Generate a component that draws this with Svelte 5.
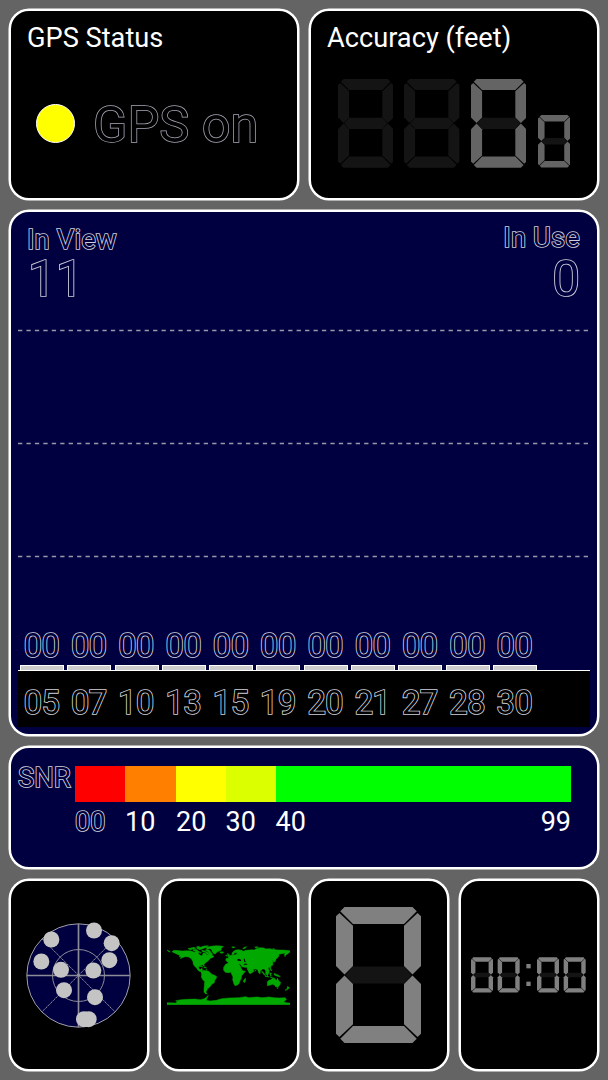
<script lang="ts">
	const satellites = [
		{ prn: '05', snr: '00' },
		{ prn: '07', snr: '00' },
		{ prn: '10', snr: '00' },
		{ prn: '13', snr: '00' },
		{ prn: '15', snr: '00' },
		{ prn: '19', snr: '00' },
		{ prn: '20', snr: '00' },
		{ prn: '21', snr: '00' },
		{ prn: '27', snr: '00' },
		{ prn: '28', snr: '00' },
		{ prn: '30', snr: '00' },
	];

	const gridLines = [41.5, 154.5, 267.5];

	const snrBands = [
		{ color: '#ff0000', label: '00', width: 50 },
		{ color: '#ff8000', label: '10', width: 51 },
		{ color: '#ffff00', label: '20', width: 49.5 },
		{ color: '#dcff00', label: '30', width: 50 },
		{ color: '#00ff00', label: '40', width: 295.5 },
	];

	const skyDots = [
		[155, 207],
		[283, 180],
		[336, 218],
		[329, 269],
		[125, 273],
		[184, 298],
		[281, 300],
		[193, 359],
		[286, 380],
		[253, 446],
		[267, 446],
	];

	// segments in a 100x160 box, a..g
	const segments: Record<string, string> = {
		a: '10,0 90,0 95,5 80,20 20,20 5,5',
		b: '96,7 100,11 100,69.5 90,79.5 80,69.5 80,22',
		c: '90,80.5 100,90.5 100,149 96,153 80,138 80,90.5',
		d: '20,140 80,140 95,155 90,160 10,160 5,155',
		e: '10,80.5 20,90.5 20,138 4,153 0,149 0,90.5',
		f: '4,7 20,22 20,69.5 10,79.5 0,69.5 0,11',
		g: '20,70 80,70 89,80 80,90 20,90 11,80',
	};

	const lit: Record<string, string> = { '0': 'abcdef', ' ': '' };
</script>

{#snippet digit(value: string)}
	{#each Object.entries(segments) as [name, points]}
		<polygon {points} class={lit[value].includes(name) ? 'seg-on' : 'seg-off'} />
	{/each}
{/snippet}

<main class="screen">
	<div class="row top">
		<section class="panel">
			<h2 class="title">GPS Status</h2>
			<div class="status">
				<span class="lamp"></span>
				<span class="outline big">GPS on</span>
			</div>
		</section>
		<section class="panel">
			<h2 class="title">Accuracy (feet)</h2>
			<div class="accuracy">
				{#each [' ', ' ', '0'] as d}
					<svg class="digit" viewBox="0 0 100 160">{@render digit(d)}</svg>
				{/each}
				<svg class="digit small" viewBox="0 0 100 160">{@render digit('0')}</svg>
			</div>
		</section>
	</div>

	<section class="panel navy chart">
		<div class="counts">
			<div class="count">
				<span class="outline label">In View</span>
				<span class="outline number">11</span>
			</div>
			<div class="count right">
				<span class="outline label">In Use</span>
				<span class="outline number">0</span>
			</div>
		</div>
		<svg class="grid" viewBox="0 0 572 340">
			{#each gridLines as y}
				<line x1="0" x2="571" y1={y} y2={y} />
			{/each}
		</svg>
		<div class="bars">
			{#each satellites as sat}
				<div class="sat">
					<span class="outline value">{sat.snr}</span>
					<span class="bar"></span>
				</div>
			{/each}
		</div>
		<div class="axis">
			{#each satellites as sat}
				<span class="outline value prn">{sat.prn}</span>
			{/each}
		</div>
	</section>

	<section class="panel navy snr">
		<span class="outline snr-title">SNR</span>
		<div class="scale">
			{#each snrBands as band, i}
				<div class="band" style="width: {band.width}px">
					<div class="swatch" style="background: {band.color}"></div>
					<div class="band-labels">
						<span class:outline={i === 0}>{band.label}</span>
						{#if i === snrBands.length - 1}<span>99</span>{/if}
					</div>
				</div>
			{/each}
		</div>
	</section>

	<div class="row tabs">
		<section class="panel tab">
			<svg class="radar" viewBox="79 157.5 315 315">
				<circle cx="236.5" cy="315" r="155" fill="#000040" stroke="#a0a0a8" stroke-width="3" />
				<circle cx="236.5" cy="315" r="78" fill="none" stroke="#8c8c98" stroke-width="3" />
				<path d="M81 315H391M236.5 160V470" stroke="#8c8c98" stroke-width="5" />
				<path d="M128 206L345 423M345 206L128 423" stroke="#9c9ca6" stroke-width="3" stroke-dasharray="5 2" />
				{#each skyDots as [cx, cy]}
					<circle {cx} {cy} r="24" fill="#c4c4c4" />
				{/each}
			</svg>
		</section>
		<section class="panel tab">
			<svg class="world" viewBox="36 46 369 180">
				<!-- North America -->
				<path d="M36 61l5 2 5 4-5-1zM51 66l3-3 8-1 20 2 14-1 12 1 10 4 8-5 6 2-2 7 6 5 5 2 3-8 7-1 5 6 6-2-3-8-8-5 6-2 8 4 3 6 5 4-3 4 7 3-5 4-7 2-5 7-8 6-5 5 1 6-4-4-8 1-5 5 1 6 5 1 4-3 2 4-3 5 6 3 5 5-4-1-9-5-8-4-5-7-6-6-4-6-1-8-5-9-8-5-11-1-8 3-6 3 3-5-7-1 4-3-5-2z" />
				<path d="M99 57l7-2 6 3-5 3zM108 55l9-2 5 3-7 3zM113 61l10-2 6 4-10 2zM125 56l11-3 11-4 13-1-7 5-8 4-11 3zM140 62l8 1 10 5 4 6-6-1-5-5-9-2zM133 66l6 3-4 2zM124 52l6-2 4 2-7 3zM158 85l6 1-2 4-5-2z" />
				<!-- Greenland and Iceland -->
				<path d="M153 53l14-3 17-2 14 1 7 2-7 5 1 5-6 3-7 3-5 6-4-1-5-5-2-7-5-3-9 1zM195 67l7-1 4 2-4 3-6-1z" />
				<!-- Caribbean -->
				<path d="M132 108l6 0 6 4-6-1zM146 112l5 0 4 3-6 0zM153 119l2 0 0 4z" />
				<!-- South America -->
				<path d="M139 127l5-5 8 1 9 2 6 5 3 4 9 3 6 4-2 6-4 5-1 7-7 4-5 7-4 4-5 3-1 5-3 4 1 5 3 2-6-1-4-5 0-8 1-10 1-14-5-4-5-8 1-6z" />
				<!-- Africa -->
				<path d="M206 113l6-9 8-4 10-1 1 4 9 2 11-1 4 5 5 10 4 5 7 0-4 6-7 8-2 10-3 6-4 9-4 3-7 2-3-5-4-13 1-8-4-8-2-6-9 1-8-1-5-6z" />
				<path d="M267 150l5-4-1 8-3 5-3-3z" />
				<!-- Europe and Asia -->
				<path d="M212 92l2-6 7 0-2-4 6-3 3-3 8 1 8-3 6-1-6-2 1-3-7 2-2 6-4-1-1-4 3-5 8-5 9-1 9 2 5 3 8-3 10-1 9-1 6 1 5-4 12-3 13 1 3 3 14-1 10 3 14 1 13 0 12 1 10 1 8 2-2 4-7-1-4 4-7 4-2 5-2-8 4-3-12 2-9 2 1 4-5 7-6 3 0 7-3 2-1-4-5 0 1 5 1 7-6 5-7 3-1 4 3 6-4 5-4-4-1 7 5 5-2 2-4-6-1-9-4-5-5 0-7 6-1 9-4-4-3-9-7-2-7 1 3 5-4 4-8 4-3-3-5-11-1-5-8 0-4-2 0-4 8-1 6-1-3-4-7 1-4 5 2 4-4 1-4-5-4-5-2 3 4 5-1 3-6-8-6 2-4 5-5 0z" />
				<path d="M217 72l3 0 4 7-6 1 1-4zM212 76l4 1-2 3zM230 52l6-1 4 2-6 2zM263 57l5-4 7-2-6 6zM299 52l8-1 3 2-8 1zM353 57l7 1-2 2z" />
				<path d="M360 80l3 5-1 5-4 4-6 5 1-4 6-5zM300 120l2 3-2 2zM344 108l3 4 0 6 4 5-3 0-4-8zM320 124l6 5 6 9-3-1-7-8zM334 127l5-4 4 3-3 8-5 1-3-4zM345 130l5 1-3 3 2 5-4-2zM330 139l9 1 3 2-9-1zM345 142l8 1-4 1zM358 131l5 3 7 2 6 6-8-2-5-2-6-3z" />
				<!-- Black and Caspian seas -->
				<path d="M246 90l5-3 8 4-1 3-10-1zM266 87l3 0 3 11-4-1z" class="sea" />
				<!-- Oceania -->
				<path d="M337 156l5-4 6-2 4-4 6-1 2 4 5 3 2-6 5 8 4 5-1 6-5 6-7 1-4-5-6-3-7 2-9 2zM366 174l4 0-2 3zM398 170l5 4-4 4-4 3-5 1 6-4zM376 157l2 1-1 1z" />
				<!-- Antarctica -->
				<path d="M36 225V219L62 220 67 217 62 213 79 210 98 209 119 208 136 210 148 207 155 202 160 197 156 206 154 212 166 214 184 212 200 207 222 205 252 204 272 201 281 204 308 202 320 204 342 202 358 204 372 205 391 204 394 210 386 216 393 219 405 220V225Z" />
			</svg>
		</section>
		<section class="panel tab">
			<svg class="huge" viewBox="0 0 100 160">{@render digit('0')}</svg>
		</section>
		<section class="panel tab">
			<svg class="clock" viewBox="0 0 344 108">
				{#each [0, 80, 198, 278] as x}
					<g transform="translate({x} 1) scale(0.66)">{@render digit('0')}</g>
				{/each}
				<rect x="166" y="21" width="13" height="13" />
				<rect x="166" y="74" width="13" height="13" />
			</svg>
		</section>
	</div>
</main>

<style>
	:global(body) {
		background: #646464;
	}
	.screen {
		box-sizing: border-box;
		width: 608px;
		height: 1080px;
		padding: 9px;
		display: flex;
		flex-direction: column;
		gap: 10px;
		background: #646464;
		color: #fff;
		font-family: Roboto, sans-serif;
		font-size: 27px;
		line-height: 32px;
		overflow: hidden;
	}
	.row {
		display: grid;
		gap: 10px;
		width: 590px;
	}
	.top {
		grid-template-columns: 1fr 1fr;
		height: 191px;
	}
	.panel {
		--panel: #000;
		box-sizing: border-box;
		border: 2px solid #fff;
		border-radius: 20px;
		box-shadow: 0 0 0 0.5px #fff;
		background: var(--panel);
	}
	.navy {
		--panel: #000040;
		width: 590px;
	}
	.title {
		margin: 11px 0 0 16px;
		font-size: 27.2px;
		font-weight: 400;
		line-height: 32px;
	}
	/* the fill is painted over the inner half of the stroke */
	.outline {
		color: var(--panel);
		font-weight: 400;
		-webkit-text-stroke: 1.7px #d0d0da;
		paint-order: stroke fill;
	}
	.status {
		display: flex;
		align-items: center;
		gap: 18px;
		height: 60px;
		margin: 39px 0 0 25px;
	}
	.lamp {
		box-sizing: border-box;
		width: 39px;
		height: 39px;
		border: 1px solid #fff;
		border-radius: 50%;
		background: #ff0;
	}
	.big {
		padding-top: 3px;
		font-size: 50.5px;
		line-height: 60px;
		-webkit-text-stroke: 1.5px #a8a8b8;
	}
	.accuracy {
		display: flex;
		align-items: flex-end;
		gap: 11.3px;
		margin: 25px 0 0 26.5px;
		--on: #646464;
	}
	.digit {
		width: 55.4px;
		height: 88.7px;
	}
	.digit.small {
		width: 32.8px;
		height: 52.5px;
	}
	.seg-on {
		fill: var(--on, #808080);
	}
	.seg-off {
		fill: #141414;
	}
	.chart {
		height: 526px;
		padding: 11px 7px 0;
	}
	.counts {
		display: flex;
		justify-content: space-between;
		height: 77px;
		padding: 0 10px 0 9px;
	}
	.count {
		display: flex;
		flex-direction: column;
		padding-top: 2px;
	}
	.label {
		font-size: 27.4px;
		line-height: 30px;
		letter-spacing: 0.15px;
	}
	.right {
		align-items: flex-end;
		padding-top: 0;
	}
	.number {
		padding-left: 1px;
		font-size: 49.5px;
		line-height: 48px;
	}
	.right .number {
		line-height: 52px;
	}
	.grid {
		display: block;
		width: 572px;
		height: 340px;
		margin-top: -11px;
		margin-bottom: -340px;
	}
	.grid line {
		stroke: #9898a8;
		stroke-width: 1.3;
		stroke-dasharray: 4.3 4.143;
	}
	.bars {
		display: flex;
		gap: 3.3px;
		height: 381px;
		align-items: flex-end;
		padding-left: 2px;
		border-bottom: 1px solid #fff;
	}
	.sat {
		width: 44px;
		display: flex;
		flex-direction: column;
		align-items: center;
	}
	.value {
		padding-right: 1px;
		font-size: 32.5px;
		line-height: 38px;
		letter-spacing: -0.4px;
	}
	.bar {
		box-sizing: border-box;
		width: 44px;
		height: 5px;
		border: 1px solid #fff;
		border-bottom: 0;
		background: #ccc;
	}
	.axis {
		--panel: #000;
		display: flex;
		gap: 3.3px;
		height: 56px;
		padding-left: 2px;
		background: #000;
	}
	.axis .outline {
		color: #000;
	}
	.prn {
		box-sizing: border-box;
		width: 44px;
		text-align: center;
		line-height: 64px;
	}
	.snr {
		height: 123px;
		display: flex;
		padding: 18px 0 0 7px;
	}
	.snr-title {
		width: 57px;
		font-size: 27.4px;
		line-height: 25px;
	}
	.scale {
		display: flex;
	}
	.swatch {
		height: 35.5px;
	}
	.band-labels {
		display: flex;
		justify-content: space-between;
		padding-top: 4px;
	}
	.tabs {
		grid-template-columns: repeat(4, 1fr);
		height: 192px;
	}
	.tab {
		display: flex;
		align-items: center;
		justify-content: center;
		padding-right: 1px;
	}
	.radar {
		width: 105px;
		height: 105px;
		overflow: visible;
	}
	.world {
		width: 123px;
		height: 60px;
		fill: #00a800;
		stroke: #00a800;
		stroke-width: 1.5;
	}
	.world .sea {
		fill: #000;
		stroke: none;
	}
	.huge {
		width: 85px;
		height: 136px;
	}
	.clock {
		width: 114.7px;
		height: 36px;
		flex: none;
	}
	.clock rect {
		fill: #808080;
	}
</style>
